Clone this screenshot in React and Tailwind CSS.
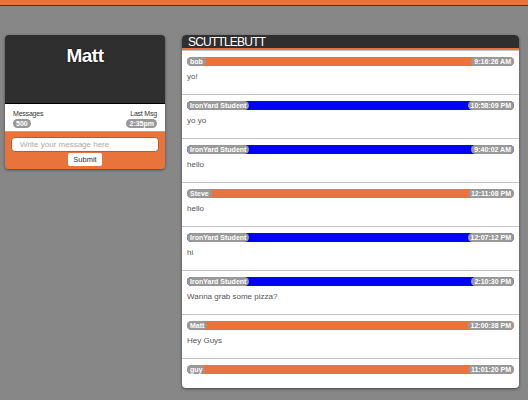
import React from "react";

const messages = [
  { user: "bob", time: "9:16:26 AM", text: "yo!", color: "bg-[#e8743b]" },
  { user: "IronYard Student", time: "10:58:09 PM", text: "yo yo", color: "bg-[#0000ff]" },
  { user: "IronYard Student", time: "9:40:02 AM", text: "hello", color: "bg-[#0000ff]" },
  { user: "Steve", time: "12:11:08 PM", text: "hello", color: "bg-[#e8743b]" },
  { user: "IronYard Student", time: "12:07:12 PM", text: "hi", color: "bg-[#0000ff]" },
  { user: "IronYard Student", time: "2:10:30 PM", text: "Wanna grab some pizza?", color: "bg-[#0000ff]" },
  { user: "Matt", time: "12:00:38 PM", text: "Hey Guys", color: "bg-[#e8743b]" },
  { user: "guy", time: "11:01:20 PM", text: "", color: "bg-[#e8743b]" },
];

function Badge({ children }) {
  return (
    <span className="h-[9px] rounded-full bg-[#999] px-[3px] text-[7px] font-bold leading-[9px] text-white">
      {children}
    </span>
  );
}

function Message({ msg }) {
  return (
    <div className="flex flex-col border-t border-[#c4c4c4] px-[5px] pt-[6px] pb-[4px] first:border-white">
      <div className={`flex h-[9px] items-center justify-between rounded-full ${msg.color}`}>
        <Badge>{msg.user}</Badge>
        <Badge>{msg.time}</Badge>
      </div>
      <p className="mt-[2px] mb-[4px] min-h-[4px] text-[8px] leading-[18px] text-[#555]">{msg.text}</p>
    </div>
  );
}

export default function App() {
  return (
    <div className="min-h-[400px] bg-[#878787] font-['Liberation_Sans',Arial,sans-serif]">
      <div className="h-[5px] bg-[#e8743b]" />
      <div className="h-px bg-[#3a3a3a]" />

      <div className="flex items-start pt-[29px] pl-[5px]">
        {/* profile card */}
        <div className="w-[160px] overflow-hidden rounded-[4px] shadow-[0_1px_3px_rgba(0,0,0,0.5)]">
          <div className="h-[69px] border-b border-black bg-[#2f2f2f] pt-[10px] text-center">
            <h1 className="text-[19px] font-bold leading-[22px] tracking-[-0.5px] text-white [text-shadow:0_0_2px_#000]">
              Matt
            </h1>
          </div>
          <div className="flex justify-between border-b border-[#aaa] bg-white px-[8px] pt-[5px] pb-[3px] text-[7px] text-[#333]">
            <div className="flex flex-col items-start gap-[1px]">
              <span className="leading-[9px] tracking-[-0.2px]">Messages</span>
              <Badge>500</Badge>
            </div>
            <div className="flex flex-col items-end gap-[1px]">
              <span className="leading-[9px] tracking-[-0.2px]">Last Msg</span>
              <Badge>2:35pm</Badge>
            </div>
          </div>
          <div className="flex flex-col items-center bg-[#e8743b] px-[6px] pt-[5px] pb-[3px]">
            <input
              placeholder="Write your message here"
              className="h-[15px] w-full rounded-[4px] border border-[#c9581f] bg-white px-[8px] text-[8px] text-[#333] placeholder:text-[#aaa] outline-none"
            />
            <button className="mt-px h-[13px] rounded-[2px] bg-white px-[5px] text-[7.5px] leading-[13px] text-[#333]">
              Submit
            </button>
          </div>
        </div>

        {/* chat panel */}
        <div className="ml-[17px] w-[337px] overflow-hidden rounded-[4px] bg-white shadow-[0_1px_3px_rgba(0,0,0,0.5)]">
          <div className="h-[15px] border-b-2 border-[#e8743b] bg-[#2f2f2f] px-[6px] text-[12px] leading-[14px] tracking-[-0.8px] text-white">
            SCUTTLEBUTT
          </div>
          {messages.map((m, i) => (
            <Message key={i} msg={m} />
          ))}
        </div>
      </div>
    </div>
  );
}
